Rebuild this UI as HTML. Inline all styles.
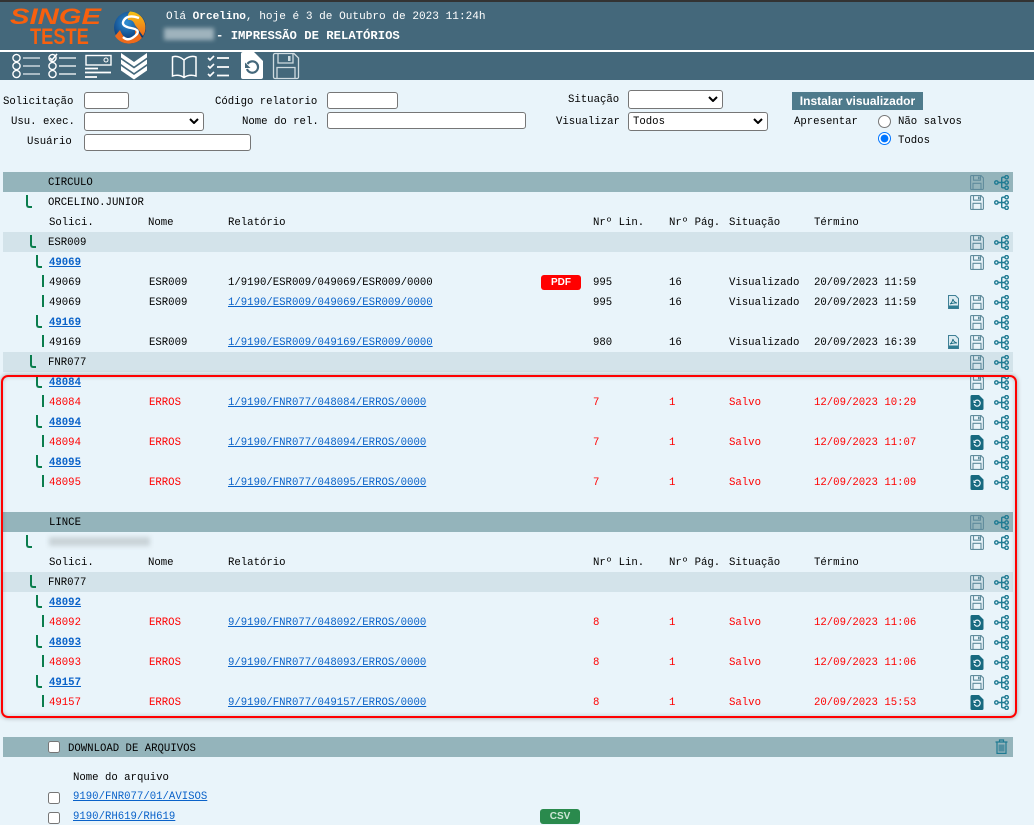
<!DOCTYPE html>
<html lang="pt-BR"><head><meta charset="utf-8"><title>Impressão de relatórios</title>
<style>
html,body{margin:0;padding:0;width:1034px;height:825px;overflow:hidden;background:#e9f4fa}
body{position:relative;font-family:"Liberation Mono",monospace;font-size:10.67px;color:#000}
a{color:#0a62c9;text-decoration:underline}
.a{position:absolute;white-space:nowrap}
.lb{position:absolute;white-space:nowrap;line-height:14px;height:14px;margin-top:1px}
input[type=text],select{position:absolute;box-sizing:border-box;margin:0;padding:0 0 0 4px;background:#fff;border:1px solid #767676;border-radius:3px;font:10.67px "Liberation Mono",monospace;color:#000}
select{-webkit-appearance:none;appearance:none}
input[type=radio],input[type=checkbox]{position:absolute;margin:0}
input[type=radio]{width:13px;height:13px}
input[type=checkbox]{width:12px;height:12px}
.ch{position:absolute;width:10px;height:6px;pointer-events:none}
.b{position:absolute;left:3px;width:1010px;height:20px}
.d{background:#94b4bb}.l{background:#d3e3ea}
.r{position:absolute;left:0;width:1034px;height:20px;line-height:20px}
.r>span,.r>a{position:absolute;white-space:nowrap;top:1px}
.e{color:#f00}
.n{left:49px}.m{left:149px}.p{left:228px}.q{left:593px}.g{left:669px}.s{left:729px}.t{left:814px}
.k{position:absolute;box-sizing:border-box;border-left:2px solid #0a7d4d;border-bottom:2px solid #0a7d4d;border-bottom-left-radius:3px;width:6px;height:13px;top:3px}
.v{position:absolute;left:42px;top:3px;width:2px;height:12px;background:#0a7d4d}
.r svg{position:absolute;top:3px;overflow:visible}
.x1{left:970px;width:14px;height:15px}
.x2{left:994px;width:15px;height:15px}
.x3{left:948px;width:11px;height:14px}
</style></head><body>
<svg width="0" height="0" style="position:absolute">
<defs>
<symbol id="sv" viewBox="0 0 14 15"><g fill="none" stroke="#5f8b9c" stroke-width="1.1"><path d="M1.5.6H11L13.4 3v10.6a.8.8 0 0 1-.8.8H1.4a.8.8 0 0 1-.8-.8V1.4a.8.8 0 0 1 .9-.8z"/><path d="M3.5.8v4.4h7V.8M3 14.2V8.3h8v5.9"/></g><rect x="8" y="1.6" width="1.6" height="2.6" fill="#5f8b9c"/></symbol>
<symbol id="tr" viewBox="0 0 15 15"><g fill="none" stroke="#1e7a92" stroke-width="1.4"><circle cx="2.4" cy="7.5" r="1.7"/><circle cx="12.6" cy="2.2" r="1.7"/><circle cx="12.6" cy="7.5" r="1.7"/><circle cx="12.6" cy="12.8" r="1.7"/><path d="M4 7.5h7M7.7 7.5V3.4q0-1.2 1.2-1.2H11M7.7 7.5v4.1q0 1.2 1.2 1.2H11"/></g></symbol>
<symbol id="rs" viewBox="0 0 13 15"><path d="M1.5 0H8.5L13 4.5V13.5A1.5 1.5 0 0 1 11.5 15H1.5A1.5 1.5 0 0 1 0 13.5V1.5A1.5 1.5 0 0 1 1.5 0z" fill="#17697f"/><path d="M4.4 6.2A3 3 0 1 1 3.8 9" fill="none" stroke="#e9f4fa" stroke-width="1.2"/><path d="M3 5v3h3z" fill="#e9f4fa"/></symbol>
<symbol id="pf" viewBox="0 0 11 14"><path d="M.5.5H7.5L10.500 3.500V13.500H.5z" fill="#dcebf1" stroke="#3f8096"/><path d="M2 9q2-1 3-5 .3 3 4 4-3-.3-7 1z" fill="none" stroke="#17697f" stroke-width=".9"/><rect x="1" y="10.500" width="9" height="3" fill="#2f7d93"/></symbol>
<symbol id="cv" viewBox="0 0 10 6"><path d="M1 1l4 4 4-4" fill="none" stroke="#000" stroke-width="2"/></symbol>
</defs></svg>

<!-- header -->
<div class="a" style="left:0;top:0;width:1034px;height:80px;background:#44687b"></div>
<div class="a" style="left:0;top:0;width:1034px;height:2px;background:#333"></div>
<div class="a" style="left:0;top:50px;width:1034px;height:2px;background:#fff"></div>
<div class="a" style="left:10px;top:4px;font:italic bold 22px/26px 'Liberation Sans',sans-serif;color:#f7600e;transform:scaleX(1.33);transform-origin:0 50%">SINGE</div>
<div class="a" style="left:30px;top:26px;font:bold 22px/22px 'Liberation Sans',sans-serif;color:#f7600e;transform:scaleX(.83);transform-origin:0 50%">TESTE</div>
<svg class="a" style="left:111px;top:10px" width="42" height="35" viewBox="0 0 42 35">
<defs><radialGradient id="gl" cx=".4" cy=".35" r=".75"><stop offset="0" stop-color="#2d8fd5"/><stop offset=".7" stop-color="#0e3f7d"/><stop offset="1" stop-color="#0b2e60"/></radialGradient><linearGradient id="go" x1="0" y1="0" x2="0" y2="1"><stop offset="0" stop-color="#f5c013"/><stop offset="1" stop-color="#ee6a1b"/></linearGradient></defs>
<circle cx="19" cy="17.5" r="16" fill="url(#gl)"/>
<path d="M19 1.5A16 16 0 0 1 32 26L24 15Q22 9 17 10 16 4 19 1.5z" fill="url(#go)"/>
<path d="M4 26A16 16 0 0 0 19 33.5A16 16 0 0 0 31 28L24 17 24 27Q14 33 9 20z" fill="#ee6a1b"/>
<path d="M28 8Q17 4 13 10T20 18 24 26 12 27" fill="none" stroke="#fff" stroke-width="2.4"/>
</svg>
<div class="a" style="left:166px;top:10px;line-height:14px;font-size:11.1px;color:#fff">Olá <b>Orcelino</b>, hoje é 3 de Outubro de 2023 11:24h</div>
<div class="a" style="left:164px;top:28px;width:50px;height:12px;background:#9fb3bd;filter:blur(2px)"></div>
<div class="a" style="left:216px;top:29px;line-height:14px;font-size:12.25px;font-weight:bold;color:#fff">- IMPRESSÃO DE RELATÓRIOS</div>

<!-- toolbar -->
<svg class="a" style="left:0;top:52px" width="310" height="28" viewBox="0 0 310 28" fill="none" stroke="#fff" stroke-width="1.4">
<g><circle cx="16.5" cy="6" r="3.6"/><circle cx="16.5" cy="14" r="3.6"/><circle cx="16.5" cy="22" r="3.6"/><path d="M23 6h17M23 14h17M23 22h17" stroke="#c9d6dc"/></g>
<g><circle cx="52.5" cy="6" r="3.6"/><path d="M50 6l2 2 5-6" stroke-width="1.6"/><circle cx="52.5" cy="14" r="3.6"/><circle cx="52.5" cy="22" r="3.6"/><path d="M59 6h17M59 14h17M59 22h17" stroke="#e1e8eb"/></g>
<g><rect x="86" y="3.5" width="25" height="9.5"/><circle cx="106" cy="8" r="2" stroke-width="1"/><path d="M85 16.5h13M85 20.5h26M85 25h12" stroke-width="1.8"/></g>
<g fill="#fff" stroke="none"><path d="M121 1l13 9 13-9v4.500l-13 9-13-9z"/><path d="M121 7.500l13 9 13-9v4.500l-13 9-13-9z"/><path d="M121 14l13 9 13-9v4.500l-13 9-13-9z"/></g>
<g stroke-width="1.5"><path d="M184 8Q178 3 172.500 5V24Q179 22 184 25.500 189 22 196 24V5Q190 3 184 8zM184 8V25"/></g>
<g stroke-width="1.6"><path d="M208 6l2 2 4-4M208 14l2 2 4-4M208 22l2 2 4-4"/><path d="M217 6h12M217 15h12M217 23.500h12" stroke-width="1.8"/></g>
<path d="M243 0H254L263 9V25a2 2 0 0 1-2 2H243a2 2 0 0 1-2-2V2a2 2 0 0 1 2-2z" fill="#fff" stroke="none"/>
<path d="M247.500 12A5.700 5.700 0 1 1 247 17" stroke="#44687b" stroke-width="2.200"/><path d="M245 10.500v5.500h5.500z" fill="#44687b" stroke="none"/>
<g stroke="#cfdbe0" stroke-width="1.300"><path d="M275 1.500H294L298.500 6V25a1.500 1.500 0 0 1-1.500 1.500H275a1.500 1.500 0 0 1-1.500-1.500V3a1.500 1.500 0 0 1 1.500-1.500z"/><path d="M278 2v9h15V2M277 26V15.500h18V26"/></g><rect x="288" y="4" width="2.500" height="5" fill="#cfdbe0" stroke="none"/>
</svg>

<!-- form -->
<div class="lb" style="left:3px;top:94px">Solicitação</div>
<input type="text" style="left:84px;top:92px;width:45px;height:17px">
<div class="lb" style="left:215px;top:94px">Código relatorio</div>
<input type="text" style="left:327px;top:92px;width:71px;height:17px">
<div class="lb" style="left:11px;top:114px">Usu. exec.</div>
<select style="left:84px;top:112px;width:120px;height:19px"><option></option></select>
<svg class="ch" style="left:189px;top:118px"><use href="#cv"/></svg>
<div class="lb" style="left:242px;top:114px">Nome do rel.</div>
<input type="text" style="left:327px;top:112px;width:199px;height:17px">
<div class="lb" style="left:27px;top:134px">Usuário</div>
<input type="text" style="left:84px;top:134px;width:167px;height:17px">
<div class="lb" style="left:568px;top:92px">Situação</div>
<select style="left:628px;top:90px;width:95px;height:19px"><option></option></select>
<svg class="ch" style="left:708px;top:96px"><use href="#cv"/></svg>
<div class="lb" style="left:556px;top:114px">Visualizar</div>
<select style="left:628px;top:112px;width:140px;height:19px;padding-top:1px"><option>Todos</option></select>
<svg class="ch" style="left:753px;top:118px"><use href="#cv"/></svg>
<div class="a" style="left:792px;top:92px;width:131px;height:18px;line-height:18px;text-align:center;background:#4f7b8c;color:#fff;font:bold 12px/18px 'Liberation Sans',sans-serif">Instalar visualizador</div>
<div class="lb" style="left:794px;top:114px">Apresentar</div>
<input type="radio" name="ap" style="left:878px;top:115px">
<div class="lb" style="left:898px;top:114px">Não salvos</div>
<input type="radio" name="ap" checked style="left:878px;top:132px">
<div class="lb" style="left:898px;top:133px">Todos</div>

<!-- bands -->
<div class="b d" style="top:172px"></div>
<div class="b l" style="top:232px"></div>
<div class="b l" style="top:352px"></div>
<div class="b d" style="top:512px"></div>
<div class="b l" style="top:572px"></div>
<div class="b d" style="top:737px"></div>

<!-- rows -->
<div class="r" style="top:172px"><span class="n" style="left:48px">CIRCULO</span><svg class="x1"><use href="#sv"/></svg><svg class="x2"><use href="#tr"/></svg></div>
<div class="r" style="top:192px"><i class="k" style="left:26px"></i><span class="n" style="left:48px">ORCELINO.JUNIOR</span><svg class="x1"><use href="#sv"/></svg><svg class="x2"><use href="#tr"/></svg></div>
<div class="r" style="top:212px"><span class="n">Solici.</span><span class="m" style="left:148px">Nome</span><span class="p">Relatório</span><span class="q">Nrº Lin.</span><span class="g">Nrº Pág.</span><span class="s">Situação</span><span class="t">Término</span></div>
<div class="r" style="top:232px"><i class="k" style="left:30px"></i><span class="n" style="left:48px">ESR009</span><svg class="x1"><use href="#sv"/></svg><svg class="x2"><use href="#tr"/></svg></div>
<div class="r" style="top:252px"><i class="k" style="left:36px"></i><a class="n" href="#"><b>49069</b></a><svg class="x1"><use href="#sv"/></svg><svg class="x2"><use href="#tr"/></svg></div>
<div class="r" style="top:272px"><i class="v"></i><span class="n">49069</span><span class="m">ESR009</span><span class="p">1/9190/ESR009/049069/ESR009/0000</span><span class="q">995</span><span class="g">16</span><span class="s">Visualizado</span><span class="t">20/09/2023 11:59</span><svg class="x2"><use href="#tr"/></svg></div>
<div class="r" style="top:292px"><i class="v"></i><span class="n">49069</span><span class="m">ESR009</span><a class="p" href="#">1/9190/ESR009/049069/ESR009/0000</a><span class="q">995</span><span class="g">16</span><span class="s">Visualizado</span><span class="t">20/09/2023 11:59</span><svg class="x3"><use href="#pf"/></svg><svg class="x1"><use href="#sv"/></svg><svg class="x2"><use href="#tr"/></svg></div>
<div class="r" style="top:312px"><i class="k" style="left:36px"></i><a class="n" href="#"><b>49169</b></a><svg class="x1"><use href="#sv"/></svg><svg class="x2"><use href="#tr"/></svg></div>
<div class="r" style="top:332px"><i class="v"></i><span class="n">49169</span><span class="m">ESR009</span><a class="p" href="#">1/9190/ESR009/049169/ESR009/0000</a><span class="q">980</span><span class="g">16</span><span class="s">Visualizado</span><span class="t">20/09/2023 16:39</span><svg class="x3"><use href="#pf"/></svg><svg class="x1"><use href="#sv"/></svg><svg class="x2"><use href="#tr"/></svg></div>
<div class="r" style="top:352px"><i class="k" style="left:30px"></i><span class="n" style="left:48px">FNR077</span><svg class="x1"><use href="#sv"/></svg><svg class="x2"><use href="#tr"/></svg></div>
<div class="r" style="top:372px"><i class="k" style="left:36px"></i><a class="n" href="#"><b>48084</b></a><svg class="x1"><use href="#sv"/></svg><svg class="x2"><use href="#tr"/></svg></div>
<div class="r e" style="top:392px"><i class="v"></i><span class="n">48084</span><span class="m">ERROS</span><a class="p" href="#">1/9190/FNR077/048084/ERROS/0000</a><span class="q">7</span><span class="g">1</span><span class="s">Salvo</span><span class="t">12/09/2023 10:29</span><svg class="x1"><use href="#rs"/></svg><svg class="x2"><use href="#tr"/></svg></div>
<div class="r" style="top:412px"><i class="k" style="left:36px"></i><a class="n" href="#"><b>48094</b></a><svg class="x1"><use href="#sv"/></svg><svg class="x2"><use href="#tr"/></svg></div>
<div class="r e" style="top:432px"><i class="v"></i><span class="n">48094</span><span class="m">ERROS</span><a class="p" href="#">1/9190/FNR077/048094/ERROS/0000</a><span class="q">7</span><span class="g">1</span><span class="s">Salvo</span><span class="t">12/09/2023 11:07</span><svg class="x1"><use href="#rs"/></svg><svg class="x2"><use href="#tr"/></svg></div>
<div class="r" style="top:452px"><i class="k" style="left:36px"></i><a class="n" href="#"><b>48095</b></a><svg class="x1"><use href="#sv"/></svg><svg class="x2"><use href="#tr"/></svg></div>
<div class="r e" style="top:472px"><i class="v"></i><span class="n">48095</span><span class="m">ERROS</span><a class="p" href="#">1/9190/FNR077/048095/ERROS/0000</a><span class="q">7</span><span class="g">1</span><span class="s">Salvo</span><span class="t">12/09/2023 11:09</span><svg class="x1"><use href="#rs"/></svg><svg class="x2"><use href="#tr"/></svg></div>
<div class="r" style="top:512px"><span class="n">LINCE</span><svg class="x1"><use href="#sv"/></svg><svg class="x2"><use href="#tr"/></svg></div>
<div class="r" style="top:532px"><i class="k" style="left:26px"></i><svg class="x1"><use href="#sv"/></svg><svg class="x2"><use href="#tr"/></svg></div>
<div class="a" style="left:49px;top:537px;width:101px;height:9px;background:#c9d3d8;filter:blur(2.5px)"></div>
<div class="r" style="top:552px"><span class="n">Solici.</span><span class="m" style="left:148px">Nome</span><span class="p">Relatório</span><span class="q">Nrº Lin.</span><span class="g">Nrº Pág.</span><span class="s">Situação</span><span class="t">Término</span></div>
<div class="r" style="top:572px"><i class="k" style="left:30px"></i><span class="n" style="left:48px">FNR077</span><svg class="x1"><use href="#sv"/></svg><svg class="x2"><use href="#tr"/></svg></div>
<div class="r" style="top:592px"><i class="k" style="left:36px"></i><a class="n" href="#"><b>48092</b></a><svg class="x1"><use href="#sv"/></svg><svg class="x2"><use href="#tr"/></svg></div>
<div class="r e" style="top:612px"><i class="v"></i><span class="n">48092</span><span class="m">ERROS</span><a class="p" href="#">9/9190/FNR077/048092/ERROS/0000</a><span class="q">8</span><span class="g">1</span><span class="s">Salvo</span><span class="t">12/09/2023 11:06</span><svg class="x1"><use href="#rs"/></svg><svg class="x2"><use href="#tr"/></svg></div>
<div class="r" style="top:632px"><i class="k" style="left:36px"></i><a class="n" href="#"><b>48093</b></a><svg class="x1"><use href="#sv"/></svg><svg class="x2"><use href="#tr"/></svg></div>
<div class="r e" style="top:652px"><i class="v"></i><span class="n">48093</span><span class="m">ERROS</span><a class="p" href="#">9/9190/FNR077/048093/ERROS/0000</a><span class="q">8</span><span class="g">1</span><span class="s">Salvo</span><span class="t">12/09/2023 11:06</span><svg class="x1"><use href="#rs"/></svg><svg class="x2"><use href="#tr"/></svg></div>
<div class="r" style="top:672px"><i class="k" style="left:36px"></i><a class="n" href="#"><b>49157</b></a><svg class="x1"><use href="#sv"/></svg><svg class="x2"><use href="#tr"/></svg></div>
<div class="r e" style="top:692px"><i class="v"></i><span class="n">49157</span><span class="m">ERROS</span><a class="p" href="#">9/9190/FNR077/049157/ERROS/0000</a><span class="q">8</span><span class="g">1</span><span class="s">Salvo</span><span class="t">20/09/2023 15:53</span><svg class="x1"><use href="#rs"/></svg><svg class="x2"><use href="#tr"/></svg></div>

<!-- pdf badge -->
<div class="a" style="left:541px;top:275px;width:40px;height:15px;background:#f00;border-radius:3px;color:#fff;font:bold 10px/15px 'Liberation Sans',sans-serif;text-align:center">PDF</div>

<!-- red highlight -->
<div class="a" style="left:1px;top:375px;width:1012px;height:339px;border:2px solid #f00;border-radius:7px;box-shadow:0 0 5px rgba(0,0,0,.35),inset 0 0 4px rgba(0,0,0,.2)"></div>

<!-- downloads -->
<input type="checkbox" style="left:48px;top:741px">
<div class="lb" style="left:68px;top:741px">DOWNLOAD DE ARQUIVOS</div>
<svg class="a" style="left:995px;top:739px" width="13" height="15" viewBox="0 0 13 15" fill="none" stroke="#1e7a92" stroke-width="1.2"><path d="M.5 3h12M4.500 3V1h4v2M2 3v11.400h9V3"/><rect x="3.500" y="5.500" width="6" height="7" fill="#4f8ea0" stroke="none"/></svg>
<div class="lb" style="left:73px;top:770px">Nome do arquivo</div>
<input type="checkbox" style="left:48px;top:792px">
<a class="lb" href="#" style="left:73px;top:789px">9190/FNR077/01/AVISOS</a>
<input type="checkbox" style="left:48px;top:812px">
<a class="lb" href="#" style="left:73px;top:809px">9190/RH619/RH619</a>
<div class="a" style="left:540px;top:809px;width:40px;height:15px;background:#2a8a4d;border-radius:3px;color:#cfe6d6;font:bold 10px/15px 'Liberation Sans',sans-serif;text-align:center">CSV</div>
</body></html>
